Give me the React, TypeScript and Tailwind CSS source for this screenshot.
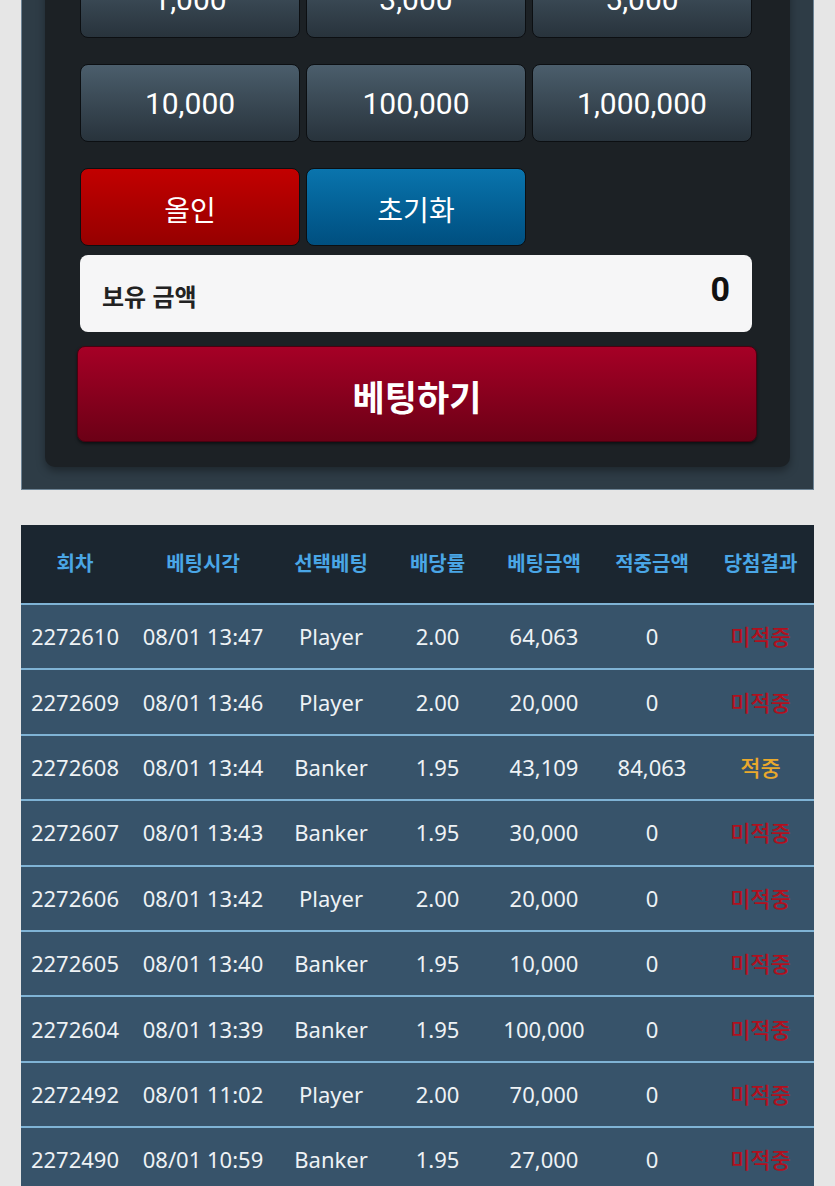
import React from "react";

const amounts = [
  ["1,000", "3,000", "5,000"],
  ["10,000", "100,000", "1,000,000"],
];

const rows = [
  ["2272610", "08/01 13:47", "Player", "2.00", "64,063", "0", "미적중"],
  ["2272609", "08/01 13:46", "Player", "2.00", "20,000", "0", "미적중"],
  ["2272608", "08/01 13:44", "Banker", "1.95", "43,109", "84,063", "적중"],
  ["2272607", "08/01 13:43", "Banker", "1.95", "30,000", "0", "미적중"],
  ["2272606", "08/01 13:42", "Player", "2.00", "20,000", "0", "미적중"],
  ["2272605", "08/01 13:40", "Banker", "1.95", "10,000", "0", "미적중"],
  ["2272604", "08/01 13:39", "Banker", "1.95", "100,000", "0", "미적중"],
  ["2272492", "08/01 11:02", "Player", "2.00", "70,000", "0", "미적중"],
  ["2272490", "08/01 10:59", "Banker", "1.95", "27,000", "0", "미적중"],
];

const headers = ["회차", "베팅시각", "선택베팅", "배당률", "베팅금액", "적중금액", "당첨결과"];

const cols = "grid grid-cols-[108px_148px_108px_105px_108px_108px_109px]";

const btn =
  "h-[78px] rounded-[8px] border border-[#0c0f12] flex items-center justify-center text-white";

export default function App() {
  return (
    <div
      className="min-h-[1186px] bg-[#e6e6e6] overflow-hidden"
      style={{ fontFamily: '"Noto Sans", "Noto Sans CJK KR", sans-serif' }}
    >
      <div className="mx-[21px] -mt-[60px] bg-[#2e3c46] border-b border-x border-[#6d8394] pb-[22px] px-[23px]">
        <div className="bg-[#1c2125] rounded-b-[10px] shadow-[0_4px_8px_rgba(0,0,0,0.35)] pt-[20px] pb-[25px] pl-[35px] pr-[38px]">
          <div className="flex flex-col gap-[26px]">
            {amounts.map((row, i) => (
              <div key={i} className="grid grid-cols-3 gap-[6px]">
                {row.map((a) => (
                  <div
                    key={a}
                    className={`${btn} bg-gradient-to-b from-[#4b5e6c] to-[#28333c] text-[30px]`}
                    style={{ fontFamily: "Roboto, sans-serif" }}
                  >
                    {a}
                  </div>
                ))}
              </div>
            ))}
            <div className="grid grid-cols-3 gap-[6px]">
              <div className={`${btn} bg-gradient-to-b from-[#c20000] to-[#960000] text-[28px] pt-[5px]`}>
                올인
              </div>
              <div className={`${btn} bg-gradient-to-b from-[#0a74ad] to-[#004f80] text-[28px] pt-[5px]`}>
                초기화
              </div>
            </div>
          </div>
          <div className="mt-[9px] h-[77px] rounded-[8px] bg-[#f6f6f7] flex items-center justify-between pl-[22px] pr-[22px]">
            <span className="text-[24px] font-bold text-[#222] pt-[6px]">보유 금액</span>
            <span className="text-[34px] font-bold text-[#111] pb-[8px]" style={{ fontFamily: "Roboto, sans-serif" }}>
              0
            </span>
          </div>
          <div className="mt-[14px] -ml-[3px] -mr-[5px] h-[96px] rounded-[8px] bg-gradient-to-b from-[#a60026] to-[#6c0016] border border-[#4a0010] shadow-[0_2px_3px_rgba(0,0,0,0.5)] flex items-center justify-center pt-[8px]">
            <span className="text-[35px] font-bold text-white">베팅하기</span>
          </div>
        </div>
      </div>

      <div className="mx-[21px] mt-[35px]">
        <div className={`${cols} h-[80px] items-center bg-[#1b2630] border-b-2 border-[#7fb3d5]`}>
          {headers.map((h) => (
            <div key={h} className="text-center text-[20px] font-bold text-[#4aa6e6]">
              {h}
            </div>
          ))}
        </div>
        {rows.map((r) => (
          <div key={r[0]} className={`${cols} h-[65.4px] items-center bg-[#37536a] border-b-2 border-[#7fb3d5]`}>
            {r.map((c, j) => (
              <div
                key={j}
                className={`text-center text-[22px] ${
                  j === 6 ? (c === "적중" ? "text-[#eaa92c] font-medium" : "text-[#b0101e] font-medium") : "text-[#eef2f5]"
                }`}
              >
                {c}
              </div>
            ))}
          </div>
        ))}
      </div>
    </div>
  );
}
